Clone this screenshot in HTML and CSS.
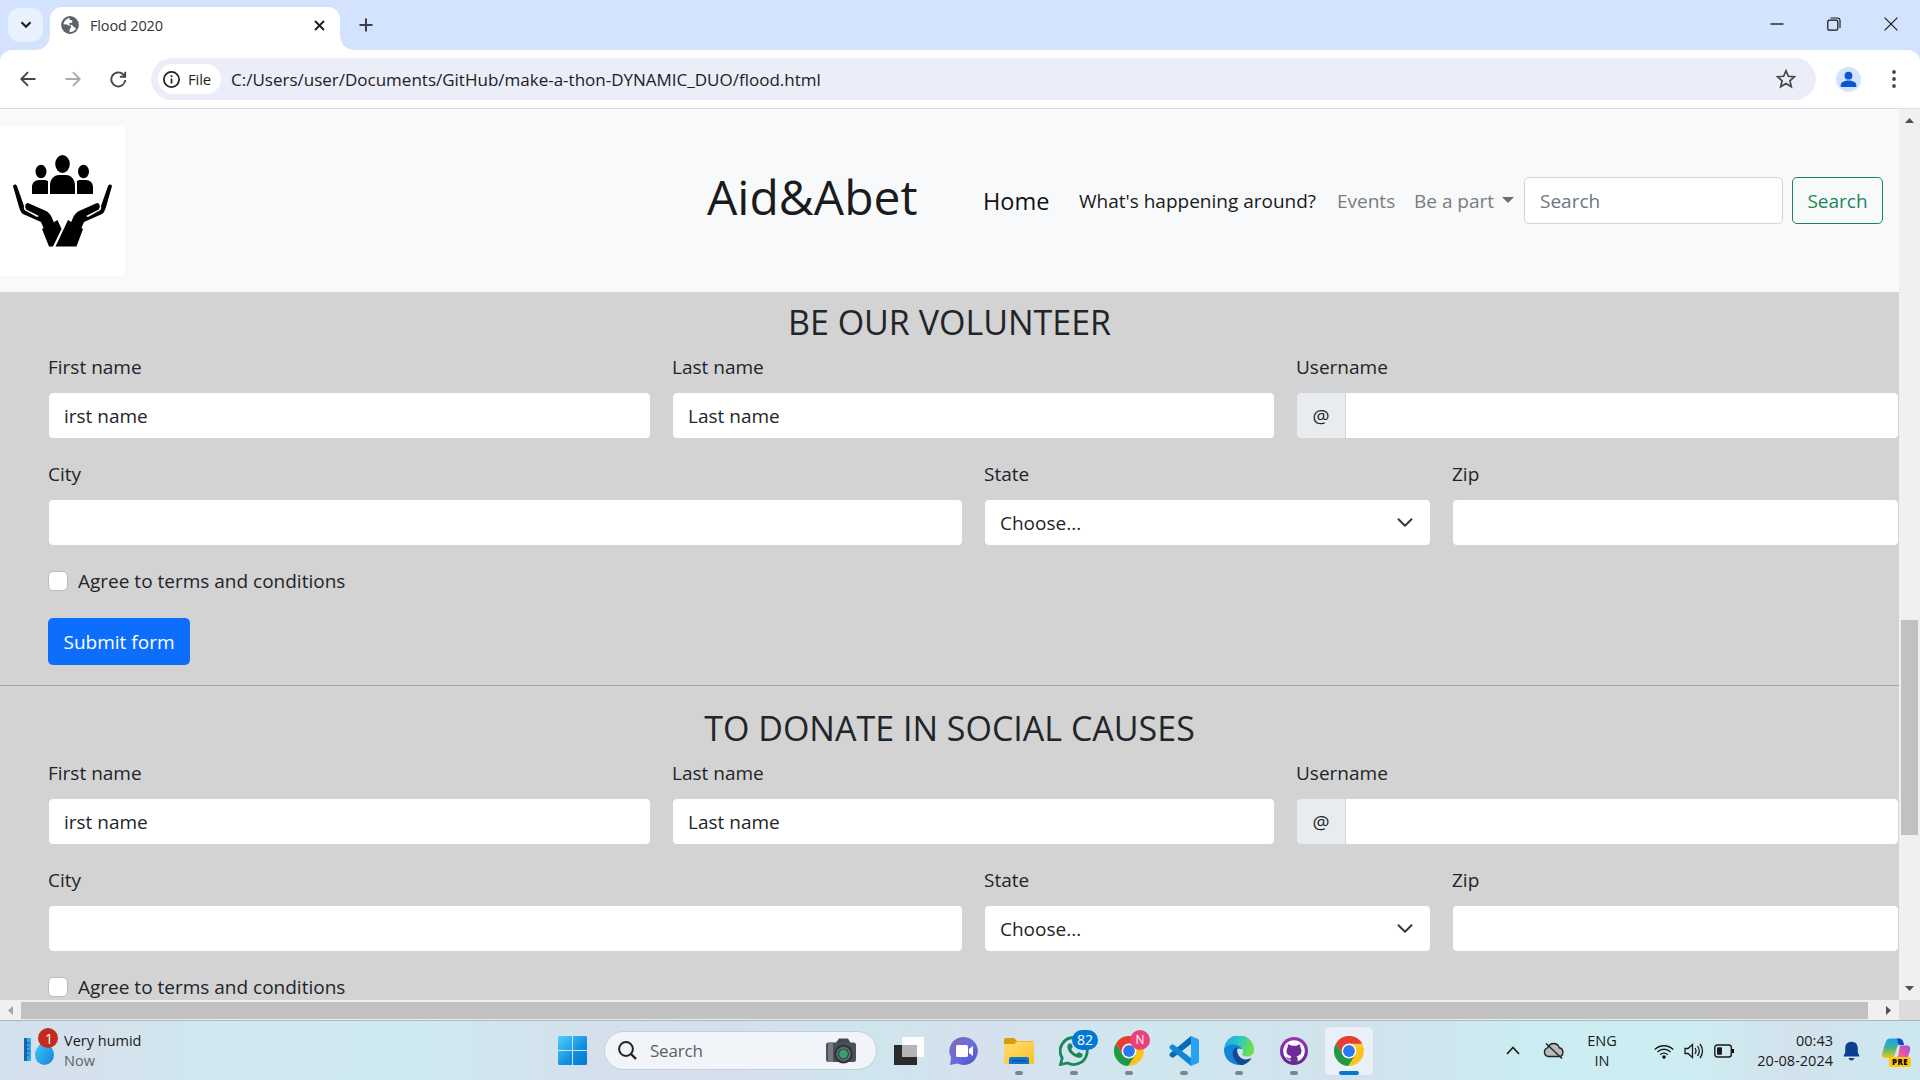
FILE: index.html
```html
<!DOCTYPE html>
<html lang="en">
<head>
<meta charset="utf-8">
<title>Flood 2020</title>
<link rel="stylesheet" href="styles.css">
</head>
<body>
<svg width="0" height="0" class="defs">
  <defs>
    <linearGradient id="win" x1="0" y1="0" x2="1" y2="1"><stop offset="0" stop-color="#4fd2fb"/><stop offset=".6" stop-color="#118ee0"/><stop offset="1" stop-color="#0477d3"/></linearGradient>
    <linearGradient id="chat" x1="0" y1="0" x2="1" y2="1"><stop offset="0" stop-color="#8d62ad"/><stop offset=".5" stop-color="#6a6fe0"/><stop offset="1" stop-color="#4a4fc4"/></linearGradient>
    <linearGradient id="folder" x1="0" y1="0" x2="1" y2="1"><stop offset="0" stop-color="#ffdd72"/><stop offset="1" stop-color="#fcbf25"/></linearGradient>
    <linearGradient id="edgeTop" x1="0" y1="0" x2="1" y2=".3"><stop offset="0" stop-color="#1e9fe8"/><stop offset=".5" stop-color="#2bc3d2"/><stop offset="1" stop-color="#6be04b"/></linearGradient>
    <linearGradient id="git" x1="0" y1="0" x2="0" y2="1"><stop offset="0" stop-color="#9a35b5"/><stop offset="1" stop-color="#5e2a8c"/></linearGradient>
    <linearGradient id="copL" x1="0" y1="0" x2="0" y2="1"><stop offset="0" stop-color="#1f9df0"/><stop offset=".5" stop-color="#45b58a"/><stop offset="1" stop-color="#f2c811"/></linearGradient>
    <linearGradient id="copR" x1="1" y1="0" x2="0" y2="1"><stop offset="0" stop-color="#9a52e8"/><stop offset=".6" stop-color="#f0569b"/><stop offset="1" stop-color="#ff8a5c"/></linearGradient>
    <linearGradient id="drop" x1="0" y1="0" x2="1" y2="1"><stop offset="0" stop-color="#45cdf4"/><stop offset="1" stop-color="#1581d8"/></linearGradient>
    <symbol id="chrome" viewBox="0 0 30 30">
      <circle cx="15" cy="15" r="15" fill="#fcc934"/>
      <path d="M15 15 21.5 11.2H28.2A15 15 0 0 1 14 30L21.5 18.7Z" fill="#fcc31c"/>
      <path d="M2 7.5A15 15 0 0 0 14 30L21.5 18.7 8.5 18.7Z" fill="#1e9b48"/>
      <path d="M2 7.5A15 15 0 0 1 28.2 7.8H15L8.5 18.7Z" fill="#e43e31"/>
      <circle cx="15" cy="15" r="7.4" fill="#fff"/><circle cx="15" cy="15" r="5.9" fill="#2b78ee"/>
    </symbol>
  </defs>
</svg>

<header class="tabs">
  <div class="tab-menu"><svg width="12" height="8" viewBox="0 0 12 8"><path d="M1.5 1.2 6 5.8l4.500-4.600" fill="none" stroke="#1f1f1f" stroke-width="2.200"/></svg></div>
  <div class="tab">
    <svg width="18" height="18" viewBox="0 0 18 18"><circle cx="9" cy="9" r="8.900" fill="#5f6368"/><path d="M8.800 1.800C5 3 3.200 5.200 2.300 8.300l3.700.2 2 1.200 2-.5v2.200l-1.300 1.800-.2 2.700c3 .3 5.500-1.200 6.600-3.600l-2.300-1.200-1.800-2-2.600-.4-.4-1.500 2.600-.5 1-1.700-1-.8-2.300-.4Z" fill="#fff"/></svg>
    <span class="tab-title">Flood 2020</span>
    <svg width="11" height="11" viewBox="0 0 11 11"><path d="m1 1 9 9M10 1l-9 9" stroke="#1f1f1f" stroke-width="1.900"/></svg>
  </div>
  <svg class="new-tab" width="14" height="14" viewBox="0 0 14 14"><path d="M7 .5v13M.5 7h13" stroke="#3c3f43" stroke-width="2"/></svg>
  <div class="window-buttons">
    <svg width="14" height="14" viewBox="0 0 14 14"><path d="M.5 7h13" stroke="#000" stroke-width="1.200"/></svg>
    <svg width="14" height="14" viewBox="0 0 14 14"><path d="M3.500 1h7a2.500 2.500 0 0 1 2.500 2.500v7.500" fill="none" stroke="#111" stroke-width="1.100"/><rect x=".8" y="3.200" width="10" height="10" rx="1.500" fill="none" stroke="#111" stroke-width="1.200"/></svg>
    <svg width="14" height="14" viewBox="0 0 14 14"><path d="m.6.6 12.800 12.800M13.400.6.6 13.400" stroke="#111" stroke-width="1.100"/></svg>
  </div>
</header>

<div class="toolbar-back"><div class="toolbar">
  <svg width="16" height="16" viewBox="0 0 16 16"><path d="M15.500 8H1.500M8 1.200 1.300 8 8 14.800" fill="none" stroke="#474747" stroke-width="1.900"/></svg>
  <svg width="16" height="16" viewBox="0 0 16 16"><path d="M.5 8h14M8 1.200 14.700 8 8 14.800" fill="none" stroke="#aaa" stroke-width="1.900"/></svg>
  <svg width="17" height="17" viewBox="0 0 17 17"><path d="M15.300 9a7 7 0 1 1-2-5.500L15 5.500M15.200.8v5h-5.400" fill="none" stroke="#474747" stroke-width="1.900"/></svg>
  <div class="address">
    <div class="chip"><svg width="17" height="17" viewBox="0 0 17 17"><circle cx="8.500" cy="8.500" r="7.600" fill="none" stroke="#222" stroke-width="1.700"/><path d="M8.500 7.500v5M8.500 4.300v1.800" stroke="#222" stroke-width="1.700"/></svg><span>File</span></div>
    <span class="url">C:/Users/user/Documents/GitHub/make-a-thon-DYNAMIC_DUO/flood.html</span>
    <svg width="20" height="20" viewBox="0 0 20 20"><path d="m10 1.800 2.400 5.500 6 .5-4.500 4 1.400 5.900-5.300-3.200-5.300 3.200 1.400-5.900-4.500-4 6-.5Z" fill="none" stroke="#474747" stroke-width="1.700"/></svg>
  </div>
  <svg class="profile" width="25" height="25" viewBox="0 0 25 25"><circle cx="12.500" cy="12.500" r="12.500" fill="#d3e3fd"/><circle cx="12.500" cy="8.700" r="3.900" fill="#0b57d0"/><path d="M4.700 20v-2c0-3 4-4.500 7.800-4.500s7.800 1.500 7.800 4.500v2Z" fill="#0b57d0"/></svg>
  <svg class="dots" width="4" height="18" viewBox="0 0 4 18"><g fill="#474747"><circle cx="2" cy="2" r="1.900"/><circle cx="2" cy="9" r="1.900"/><circle cx="2" cy="16" r="1.900"/></g></svg>
</div></div>

<main class="viewport">
  <div class="page">
    <nav class="navbar">
      <div class="logo"><svg width="125" height="150" viewBox="0 0 125 150">
        <ellipse cx="62.500" cy="38" rx="7.300" ry="9"/><ellipse cx="41" cy="45.500" rx="5.500" ry="6.700"/><ellipse cx="83.500" cy="45.500" rx="5.500" ry="6.700"/>
        <path d="M50 68V60c0-7 4-11 9-11h7c5 0 9 4 9 11v8ZM32 68V61c0-4 3-7 7-7h6l3 1v13ZM77 68V55l2-1h7c4 0 7 3 7 7v7Z"/>
        <path id="hand" d="M12.700 30.500"/>
        <g id="arm"><path d="M13 60c1-2 3-2 4 0l7 20c-1 4 2 5 4 6l9 5 2-1-12-6c-3-2-2-7 1-7l18 8c4 2 6 6 8 12l-10 6-3-7-18-8c-2-1-3-4-4-7Z"/></g>
        <path d="M112 60c-1-2-3-2-4 0l-7 20c1 4-2 5-4 6l-9 5-2-1 12-6c3-2 2-7-1-7l-18 8c-4 2-6 6-8 12l10 6 3-7 18-8c2-1 3-4 4-7Z"/>
        <path d="m42 103 15.500-9 4 9-8.500 17.500h-4ZM55.500 120.500 68 94l15 9-6.500 17.500Z"/>
      </svg></div>
      <h1 class="brand">Aid&amp;Abet</h1>
      <a class="home">Home</a>
      <a class="active">What's happening around?</a>
      <a class="events">Events</a>
      <a class="part">Be a part</a><i class="caret"></i>
      <input class="search" placeholder="Search">
      <button class="search-btn">Search</button>
    </nav>

    <section class="form-block">
      <h2>BE OUR VOLUNTEER</h2>
      <form class="form">
        <div class="field third"><label>First name</label><input value="irst name"></div>
        <div class="field third"><label>Last name</label><input value="Last name"></div>
        <div class="field third"><label>Username</label><div class="group"><span>@</span><input></div></div>
        <div class="field half"><label>City</label><input></div>
        <div class="field quarter"><label>State</label><div class="select"><span>Choose...</span><svg width="20" height="20" viewBox="0 0 16 16"><path fill="none" stroke="#343a40" stroke-linecap="round" stroke-linejoin="round" stroke-width="1.600" d="m2.800 5 5.200 5.200 5.200-5.200"/></svg></div></div>
        <div class="field quarter"><label>Zip</label><input></div>
        <div class="check"><i></i><span>Agree to terms and conditions</span></div>
        <button class="submit" type="button">Submit form</button>
      </form>
    </section>
    <hr>
    <section class="form-block donate">
      <h2>TO DONATE IN SOCIAL CAUSES</h2>
      <form class="form">
        <div class="field third"><label>First name</label><input value="irst name"></div>
        <div class="field third"><label>Last name</label><input value="Last name"></div>
        <div class="field third"><label>Username</label><div class="group"><span>@</span><input></div></div>
        <div class="field half"><label>City</label><input></div>
        <div class="field quarter"><label>State</label><div class="select"><span>Choose...</span><svg width="20" height="20" viewBox="0 0 16 16"><path fill="none" stroke="#343a40" stroke-linecap="round" stroke-linejoin="round" stroke-width="1.600" d="m2.800 5 5.200 5.200 5.200-5.200"/></svg></div></div>
        <div class="field quarter"><label>Zip</label><input></div>
        <div class="check"><i></i><span>Agree to terms and conditions</span></div>
      </form>
    </section>
  </div>
  <div class="vbar">
    <svg width="9" height="5" viewBox="0 0 9 5"><path d="M0 5 4.500 0 9 5Z" fill="#505050"/></svg>
    <div class="vthumb"></div>
    <svg width="9" height="5" viewBox="0 0 9 5"><path d="M0 0l4.500 5L9 0Z" fill="#505050"/></svg>
  </div>
  <div class="hbar">
    <svg width="5" height="9" viewBox="0 0 5 9"><path d="M5 0 0 4.500 5 9Z" fill="#a3a3a3"/></svg>
    <div class="hthumb"></div>
    <svg width="5" height="9" viewBox="0 0 5 9"><path d="m0 0 5 4.500L0 9Z" fill="#505050"/></svg>
  </div>
  <div class="corner"></div>
</main>

<footer class="taskbar">
  <div class="weather">
    <svg width="36" height="38" viewBox="0 0 36 38"><rect x="0" y="10" width="7" height="23" rx="1" fill="#2fa8e8"/><path d="M0 10h3v23H0Z" fill="#1565b4"/><path d="M3 15h3M3 19h2M3 23h3M3 27h2" stroke="#0d5096"/><path d="M20.500 10c4 7 9.500 10 9.500 17a9.500 10 0 0 1-19 0c0-7 5.500-10 9.500-17Z" fill="url(#drop)"/><circle cx="24" cy="10" r="10" fill="#c42b1c"/><text x="21" y="15.500" font-size="14" fill="#fff">1</text></svg>
    <div class="weather-text"><span>Very humid</span><span class="now">Now</span></div>
  </div>
  <svg class="start" width="29" height="29" viewBox="0 0 29 29"><path d="M1 0h13v14H0V1ZM15 0h13l1 1v13H15ZM0 15h14v14H1l-1-1ZM15 15h14v13l-1 1H15Z" fill="url(#win)"/></svg>
  <div class="pill">
    <svg width="19" height="19" viewBox="0 0 19 19"><circle cx="8" cy="8" r="6.900" fill="none" stroke="#222" stroke-width="2"/><path d="m13 13 5 5" stroke="#222" stroke-width="2.400"/></svg>
    <span>Search</span>
    <svg width="30" height="26" viewBox="0 0 30 26"><path d="M9 6 13 .5h9L25 6Z" fill="#43494f"/><rect y="4.500" width="30" height="19.500" rx="2.500" fill="#4a5158"/><path d="M2 4.500h5v19.500H2Z" fill="#727a82"/><circle cx="17.500" cy="16" r="9.500" fill="#31373d"/><circle cx="17.500" cy="16" r="7" fill="#69737a"/><circle cx="17.500" cy="16" r="5.500" fill="#1f4c38"/><circle cx="17.500" cy="16" r="4.400" fill="#3f9d6c"/></svg>
  </div>
  <div class="apps">
    <div class="app"><svg width="32" height="30" viewBox="0 0 32 30"><path d="M1 9h23v20H1Z" fill="#2c2b2b"/><path d="M9 1h22v20H9Z" fill="#fff" opacity=".88"/><path d="M9 9h15v12H9Z" fill="#b4b4b4"/></svg></div>
    <div class="app"><svg width="30" height="30" viewBox="0 0 30 30"><path d="M15 1a14 14 0 1 1-6.500 26.500L1 29l1-7.500A14 14 0 0 1 15 1Z" fill="url(#chat)"/><rect x="7" y="9" width="12" height="12" rx="1.500" fill="#fff"/><path d="m20 13 4-3v10l-4-3Z" fill="#fff"/></svg></div>
    <div class="app"><svg width="30" height="30" viewBox="0 0 30 30"><path d="M0 3.500Q0 2 1.500 2H10l3 3h15q2 0 2 2v3H0Z" fill="#d99b0a"/><path d="M0 8h10l3-2.500h17V28H0Z" fill="url(#folder)"/><path d="M5 28v-5q0-2 2-2h16q2 0 2 2v5Z" fill="#0f75c9"/><path d="M8 24.700h14" stroke="#0a4f94" stroke-width="1.200"/></svg><i></i></div>
    <div class="app"><svg width="30" height="30" viewBox="0 0 30 30"><path d="M15 1.500A13.500 13.500 0 1 1 8.500 27L1.500 28.500 3.200 22A13.500 13.500 0 0 1 15 1.500Z" fill="none" stroke="#16885a" stroke-width="2.800"/><path d="M10 7.500c-5 4 3 14.500 11 14.300 2 0 3-2.300 2.500-3.800l-4-2-2 2c-3-1.200-4.500-3-5.200-5l1.500-2-1.500-3.500Z" fill="#16885a"/></svg><b class="badge count">82</b><i></i></div>
    <div class="app"><svg width="30" height="30"><use href="#chrome"/></svg><b class="badge person">N</b><i></i></div>
    <div class="app"><svg width="30" height="30" viewBox="0 0 30 30"><path d="M22 0v8L4.500 21.500 2.500 21.500.5 19.500v-1.700Z" fill="#0b6ab4"/><path d="M22 30v-8L4.500 8.500h-2l-2 2v1.700Z" fill="#1088d8"/><path d="m22 0 7 3q1 .5 1 1.500v21q0 1-1 1.500l-7 3Z" fill="#27a2f2"/></svg><i></i></div>
    <div class="app"><svg width="30" height="30" viewBox="0 0 30 30"><path d="M0 15A15 15 0 0 1 30 13c.3 5-3 7.500-7 7.500-5 0-5.500-1.800-4.500-3 2-3-1-7.500-6-7.500S1 12 0 15Z" fill="url(#edgeTop)"/><path d="M0 15c0-4 4-6.500 9-6.500 5.500 0 9 3 9 5-6-3-9 5-4.500 10 3 3.500 8 3 12 1A15 15 0 0 1 0 15Z" fill="#1484d6"/><path d="M13 11c-4 1.500-5 5-4 9 1.500 6 6.500 9.500 10 9 4-1.500 7-4 8.500-7-9 4-15-1-14.500-11Z" fill="#114a94"/></svg><i></i></div>
    <div class="app"><svg width="30" height="30" viewBox="0 0 30 30"><circle cx="15" cy="15" r="14" fill="url(#git)"/><circle cx="15" cy="15" r="10.800" fill="#fff"/><path d="M9 8.500q2 0 3.500 1.300h5Q19 8.500 21 8.500l.5 3.300q1 1.500 1 3c0 3.500-2.200 5-4.700 5.300q.8 1 .8 2.500V26h-7v-2.300c-3 .6-3.600-2-5-2.700 1.700-.4 2.400 2.200 5 1.200q0-1.200.8-2.100C9 19.800 7.500 18 7.500 15q0-1.700 1-3.200Z" fill="#6f2c98"/></svg><i></i></div>
    <div class="app current"><svg width="30" height="30"><use href="#chrome"/></svg><i></i></div>
  </div>
  <div class="tray">
    <svg width="14" height="9" viewBox="0 0 14 9"><path d="m1 8 6-6.500L13 8" fill="none" stroke="#1b1b1b" stroke-width="1.700"/></svg>
    <svg class="cloud" width="21" height="18" viewBox="0 0 21 18"><path d="M5 14.500a4.500 4.500 0 0 1-.4-8.700C6 2.500 8 1.500 10.500 1.500s5 1.500 5.700 4.300c5 .8 4.800 8.700-.2 8.700Z" fill="#b9babb" stroke="#222" stroke-width="1.400"/><path d="m3 1.500 16 15" stroke="#222" stroke-width="1.400"/></svg>
    <div class="lang"><span>ENG</span><span>IN</span></div>
    <svg width="20" height="16" viewBox="0 0 20 16"><g fill="none" stroke="#1b1b1b" stroke-width="1.400"><path d="M.8 6.500a13 13 0 0 1 18.400 0M3.500 9a9.200 9.200 0 0 1 13 0M6.200 11.700a5.400 5.400 0 0 1 7.600 0"/></g><circle cx="10" cy="14" r="1.700"/></svg>
    <svg width="20" height="16" viewBox="0 0 20 16"><g fill="none" stroke="#1b1b1b" stroke-width="1.300"><path d="M1 5.500h3l4.500-4v13l-4.500-4H1ZM11 5q2 3 0 6M13.500 3q3.500 5 0 10M16 1q5 7 0 14"/></g></svg>
    <svg width="21" height="14" viewBox="0 0 21 14"><rect x=".8" y="1" width="16.500" height="12" rx="2.500" fill="none" stroke="#1b1b1b" stroke-width="1.400"/><rect x="3" y="3.200" width="5" height="7.600" rx="1" fill="#1b1b1b"/><path d="M18 5h2v4h-2Z"/></svg>
    <div class="clock"><span>00:43</span><span>20-08-2024</span></div>
    <svg class="bell" width="17" height="20" viewBox="0 0 17 20"><path d="M8.500.8c-4 0-6.300 2.800-6.300 6.500v4L.5 15.500h16l-1.700-4.200v-4C14.800 3.600 12.500.8 8.500.8ZM5.500 17h6q-1 2.500-3 2.500t-3-2.500Z" fill="#0b3f94"/></svg>
    <svg class="copilot" width="30" height="29" viewBox="0 0 30 29"><path d="M8 .5h9q3 0 4 3l1 3h-4q-2 0-3 3l-2.500 8q-.8 2.500-3.500 2.500H4q-4 0-4-4Q2 8 4 3.500 5 .5 8 .5Z" fill="url(#copL)"/><path d="M16 .5q4 0 5 3l1 3.500h-4q-2 0-3-6.500Z" fill="#1442bd"/><path d="M18 7.500h7q4 0 3 5l-2 6q-.8 2.500-4 2.500h-9q2-.5 3-3Z" fill="url(#copR)"/><rect x="7" y="19" width="22" height="10" rx="2" fill="#ffc60a"/><text x="10" y="26.800" font-size="7.800" font-weight="800" letter-spacing=".5">PRE</text></svg>
  </div>
</footer>
</body>
</html>
```
FILE: styles.css
```css
* { box-sizing: border-box; }
body { margin: 0; width: 1920px; height: 1080px; overflow: hidden; font-family: "Open Sans", "Noto Sans", sans-serif; font-size: 19px; color: #212529; display: flex; flex-direction: column; }
svg { display: block; flex: none; }
.defs { display: none; display: block; position: absolute; }
input, button { font: inherit; color: inherit; }
span, a, h1, h2, label { white-space: nowrap; }

/* Browser tab strip */
.tabs { height: 50px; background: #d3e3fd; display: flex; align-items: flex-start; padding-left: 8px; }
.tab-menu { width: 35px; height: 34px; margin-top: 8px; border-radius: 12px; background: #e9f1fe; display: grid; place-items: center; }
.tab { width: 290px; height: 43px; margin: 7px 0 0 7px; border-radius: 12px 12px 0 0; background: #fff; display: flex; align-items: center; padding: 0 15px 7px 11px; position: relative; }
.tab::before, .tab::after { content: ""; position: absolute; bottom: 0; width: 14px; height: 14px; }
.tab::before { left: -14px; background: radial-gradient(circle at 0 0, transparent 13.500px, #fff 14px); }
.tab::after { right: -14px; background: radial-gradient(circle at 100% 0, transparent 13.500px, #fff 14px); }
.tab-title { margin-left: 11px; flex: 1; font-size: 14.500px; letter-spacing: -.15px; color: #333; }
.new-tab { margin: 18px 0 0 19px; }
.window-buttons { display: flex; gap: 43px; margin: 17px 22px 0 auto; }

/* Browser toolbar */
.toolbar-back { background: #d3e3fd; }
.toolbar { height: 59px; background: #fff; border-radius: 12px 12px 0 0; border-bottom: 1px solid #dcdfe2; display: flex; align-items: center; padding-left: 20px; }
.toolbar > svg + svg { margin-left: 29px; }
.address { width: 1665px; height: 42px; margin-left: 24px; border-radius: 21px; background: #ebeef8; display: flex; align-items: center; padding: 0 20px 0 7px; }
.chip { width: 63px; height: 30px; border-radius: 15px; background: #fff; display: flex; align-items: center; padding-left: 5px; font-size: 15px; gap: 8px; color: #1f1f1f; letter-spacing: -.2px; }
.url { margin-left: 10px; flex: 1; font-size: 17px; color: #202124; }
.profile { margin-left: 20px; }
.toolbar > .dots { margin-left: 31px; }

/* Scrolled page area */
.viewport { height: 912px; display: grid; grid-template: 891px 20px / 1899px 21px; border-bottom: 1px solid #a9b5bd; background: #f0f0f0; }
.page { background: #d3d3d3; overflow: hidden; }
.navbar { height: 183px; background: #f8f9fa; display: flex; align-items: center; }
.logo { width: 125px; height: 150px; background: #fff; }
.brand { width: 220px; margin: 0 0 0 582px; font-size: 48px; font-weight: 500; line-height: 60px; color: #1a1b1c; padding-bottom: 7px; }
.home { width: 66px; margin-left: 56px; font-size: 23.500px; color: #111; }
.active { width: 238px; margin-left: 30px; color: #191a1b; }
.events { width: 57px; margin-left: 20px; color: #7b7c7d; }
.part { width: 78px; margin-left: 20px; color: #7b7c7d; }
.caret { margin: -2px 0 0 10px; border: 6px solid transparent; border-top-color: #6c6d6e; border-bottom: 0; }
.search { width: 259px; height: 47px; margin-left: 10px; border: 1px solid #ced4da; border-radius: 5px; padding: 0 15px; }
.search::placeholder { color: #6c757d; }
.search-btn { width: 91px; height: 47px; margin-left: 9px; border: 1px solid #198754; border-radius: 5px; background: none; color: #198754; padding: 0; }

.form-block h2 { margin: 0; height: 60px; line-height: 60px; text-align: center; font-size: 34px; font-weight: 500; color: #212529; }
.form { margin-left: 48px; display: grid; grid-template-columns: repeat(12, 1fr); column-gap: 21px; row-gap: 20px; }
.third { grid-column: span 4; }
.half { grid-column: span 6; }
.quarter { grid-column: span 3; }
.field label { display: block; height: 30px; line-height: 31px; margin-bottom: 10px; }
.field input, .select { width: 100%; height: 47px; border: 1px solid #ced4da; border-radius: 5px; background: #fff; padding: 0 15px; display: block; line-height: 28px; }
.group { display: flex; }
.group span { width: 50px; height: 47px; border: 1px solid #ced4da; border-radius: 5px 0 0 5px; background: #e9ecef; display: grid; place-items: center; }
.group input { flex: 1; width: auto; margin-left: -1px; border-radius: 0 5px 5px 0; min-width: 0; }
.field .select { display: flex; align-items: center; justify-content: space-between; }
.check { grid-column: span 12; height: 30px; display: flex; align-items: center; gap: 10px; }
.check i { width: 20px; height: 20px; border: 1px solid #bcbcbc; border-radius: 5px; background: #fff; }
.submit { grid-column: span 12; justify-self: start; width: 142px; height: 47px; margin-top: 2px; border: 0; border-radius: 5px; background: #0d6efd; color: #fff; padding: 0; }
hr { height: 1px; margin: 20px 0 12px; border: 0; background: #a3a3a3; }

.vbar { display: flex; flex-direction: column; align-items: center; padding: 9px 0; }
.vthumb { width: 17px; height: 215px; background: #c1c1c1; margin: 497px 0 auto; }
.hbar { display: flex; align-items: center; padding: 0 8px; }
.hthumb { width: 1847px; height: 17px; background: #c1c1c1; margin: 0 auto 0 8px; }
.corner { background: #dcdcdc; }

/* Desktop taskbar */
.taskbar { height: 59px; flex: none; display: flex; align-items: center; background: linear-gradient(90deg, #d3e0ed 0, #d5e1ec 90px, #cfe8ef 200px, #cfeaf0 420px, #d4e0ec 600px, #d5dfeb 740px, #cfe5ee 870px, #d5e1ed 990px, #cfe7ee 1150px, #d2e2ec 1350px, #cbedf1 1540px, #cdedf2 1690px, #d2e2ed 1790px, #cde8f0 1920px); }
.weather { width: 534px; margin-left: 24px; display: flex; align-items: center; gap: 4px; }
.weather svg { margin-bottom: 8px; }
.weather-text, .lang, .clock { display: flex; flex-direction: column; font-size: 14.500px; line-height: 20px; color: #1b1b1b; }
.now { color: #5c6468; }
.pill { width: 273px; height: 39px; margin-left: 17px; border: 1px solid #c3cedb; border-radius: 20px; background: #f1f5fa; display: flex; align-items: center; padding: 0 20px 0 13px; }
.pill span { flex: 1; margin-left: 13px; font-size: 17px; color: #5b5f63; letter-spacing: -.2px; }
.apps { display: flex; gap: 7px; margin-left: 8px; }
.app { width: 48px; height: 48px; border-radius: 5px; display: grid; place-items: center; position: relative; }
.app > i { position: absolute; bottom: 0; left: 20px; width: 8px; height: 4px; border-radius: 2px; background: #7d8589; }
.current { background: #e9f0f8; box-shadow: 0 0 0 1px #d5e0e9; }
.app.current > i { left: 14px; width: 20px; background: #0078d4; }
.badge { position: absolute; top: 3px; height: 20px; border-radius: 10px; color: #fff; font-weight: 400; text-align: center; line-height: 20px; }
.count { left: 22px; width: 26px; font-size: 14px; background: #0078d4; }
.person { left: 25px; width: 20px; font-size: 12px; background: #ec407a; }
.tray { display: flex; align-items: center; margin-left: 133px; }
.cloud { margin-left: 23px; }
.lang { width: 32px; margin: 0 36px 0 22px; align-items: center; font-size: 14.500px; }
.tray .lang + svg + svg, .tray .lang + svg + svg + svg { margin-left: 10px; }
.clock { width: 98px; align-items: flex-end; }
.bell { margin-left: 10px; }
.copilot { margin: 3px 0 0 22px; }
```
